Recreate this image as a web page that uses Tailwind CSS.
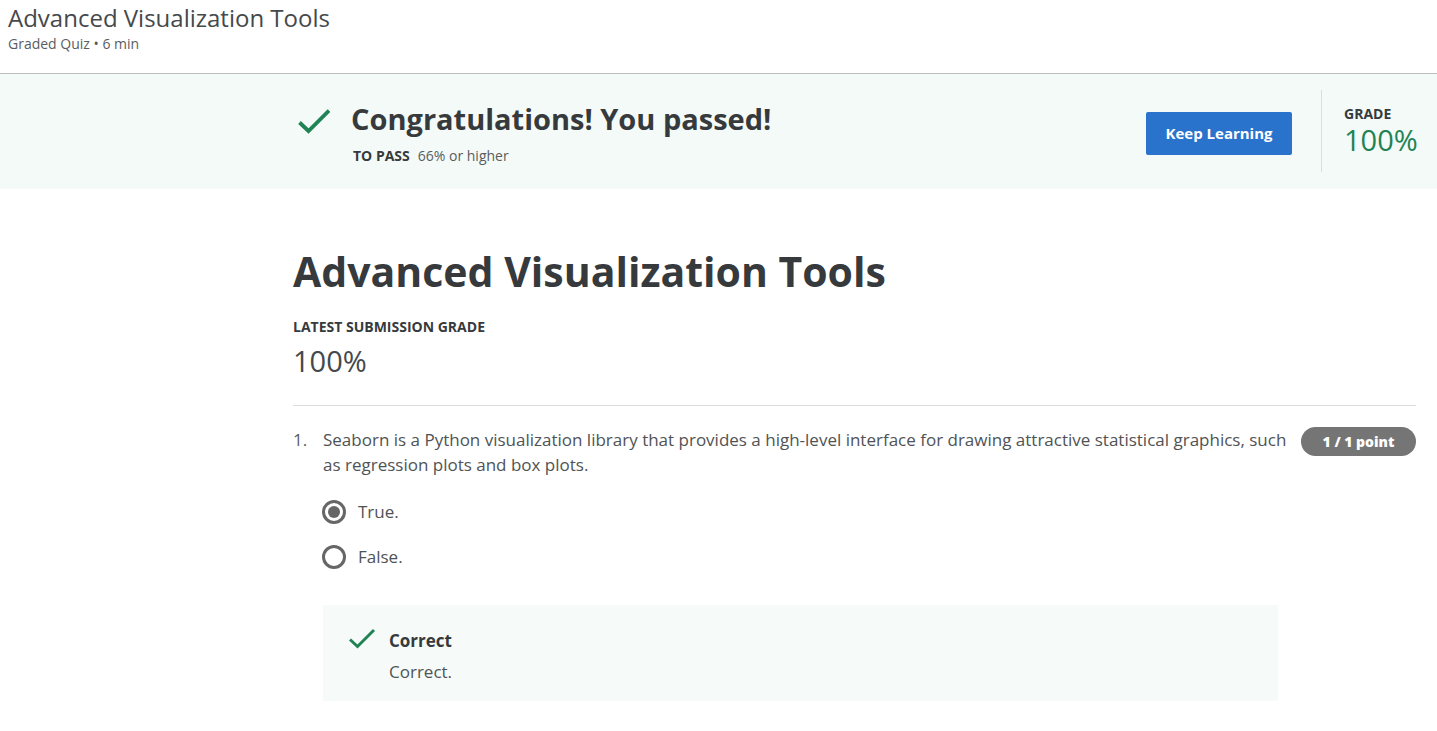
<!DOCTYPE html>
<html lang="en">
<head>
<meta charset="utf-8">
<title>Advanced Visualization Tools</title>
<script src="https://cdn.jsdelivr.net/npm/@tailwindcss/browser@4"></script>
</head>
<body class="min-h-screen bg-white font-['Open_Sans',sans-serif] text-[#373a3c]">
<header class="h-[74px] border-b border-[#bbbfbe] px-2 pt-[3px]">
  <p class="text-2xl leading-[30px] text-[#45494b]">Advanced Visualization Tools</p>
  <p class="text-sm leading-[22px] text-[#5a5d5f]">Graded Quiz • 6 min</p>
</header>
<section class="flex h-[115px] items-start bg-[#f3faf8] pr-[21px] pl-[298px]">
  <svg class="mt-8 h-8 w-8 shrink-0" viewBox="0 0 32 32" fill="none" stroke="#1f8354" stroke-width="3.8"><path d="M1.5 16.5L10.500 25L31 4.500"/></svg>
  <div class="ml-[21px] flex-1 pt-[25px]">
    <h2 class="text-[29px] leading-10 font-bold">Congratulations! You passed!</h2>
    <p class="mt-[7px] ml-[2px] text-sm leading-5"><b class="mr-2 font-bold">TO PASS</b><span class="text-[#5a5d5f]">66% or higher</span></p>
  </div>
  <button type="button" class="mt-[38px] mr-[29px] h-[43px] w-[146px] rounded-[2px] bg-[#2a73cc] text-[15px] font-bold text-white">Keep Learning</button>
  <div class="mt-4 h-[82px] w-[95px] border-l border-[#dddddd] pt-[14px] pl-[22px]">
    <p class="text-sm leading-5 font-bold">GRADE</p>
    <p class="text-[29px] leading-8 text-[#1f8354]">100%</p>
  </div>
</section>
<main class="pt-[54px] pr-[21px] pb-[29px] pl-[293px]">
  <h1 class="text-[41px] leading-[56px] font-bold">Advanced Visualization Tools</h1>
  <p class="mt-[18px] text-sm leading-5 font-bold">LATEST SUBMISSION GRADE</p>
  <p class="mt-1 text-[29px] leading-10 text-[#45494b]">100%</p>
  <hr class="mt-6 border-[#dddddd]">
  <div class="mt-[21px] flex items-start text-[17px] leading-[25px]">
    <span class="w-[30px] shrink-0 text-[#5a5d5f]">1.</span>
    <fieldset class="min-w-0 flex-1">
      <legend class="text-[#505355]">Seaborn is a Python visualization library that provides a high-level interface for drawing attractive statistical graphics, such as regression plots and box plots.</legend>
      <label class="mt-[23px] -ml-px flex h-6 w-fit items-center gap-3 leading-6 text-[#505355]">
        <input type="radio" name="answer" checked class="m-0 size-6 appearance-none rounded-full border-3 border-[#666666] bg-clip-content p-[3px] checked:bg-[#666666]">True.
      </label>
      <label class="mt-[21px] -ml-px flex h-6 w-fit items-center gap-3 leading-6 text-[#505355]">
        <input type="radio" name="answer" class="m-0 size-6 appearance-none rounded-full border-3 border-[#666666] bg-clip-content p-[3px] checked:bg-[#666666]">False.
      </label>
      <div class="mt-9 mr-[15px] flex h-24 items-start bg-[#f6fbf9] pt-[23px] pl-[26px]">
        <svg class="h-[25px] w-[26px] shrink-0" viewBox="0 0 26 25" fill="none" stroke="#1f8354" stroke-width="3"><path d="M1 11.5L8.500 18.500L25 2"/></svg>
        <div class="ml-[14px]">
          <p class="font-bold">Correct</p>
          <p class="mt-[6px] text-[#505355]">Correct.</p>
        </div>
      </div>
    </fieldset>
    <span class="ml-2 h-[29px] w-[115px] shrink-0 rounded-full bg-[#757575] text-center text-sm leading-[29px] font-extrabold text-white">1 / 1 point</span>
  </div>
</main>
</body>
</html>
